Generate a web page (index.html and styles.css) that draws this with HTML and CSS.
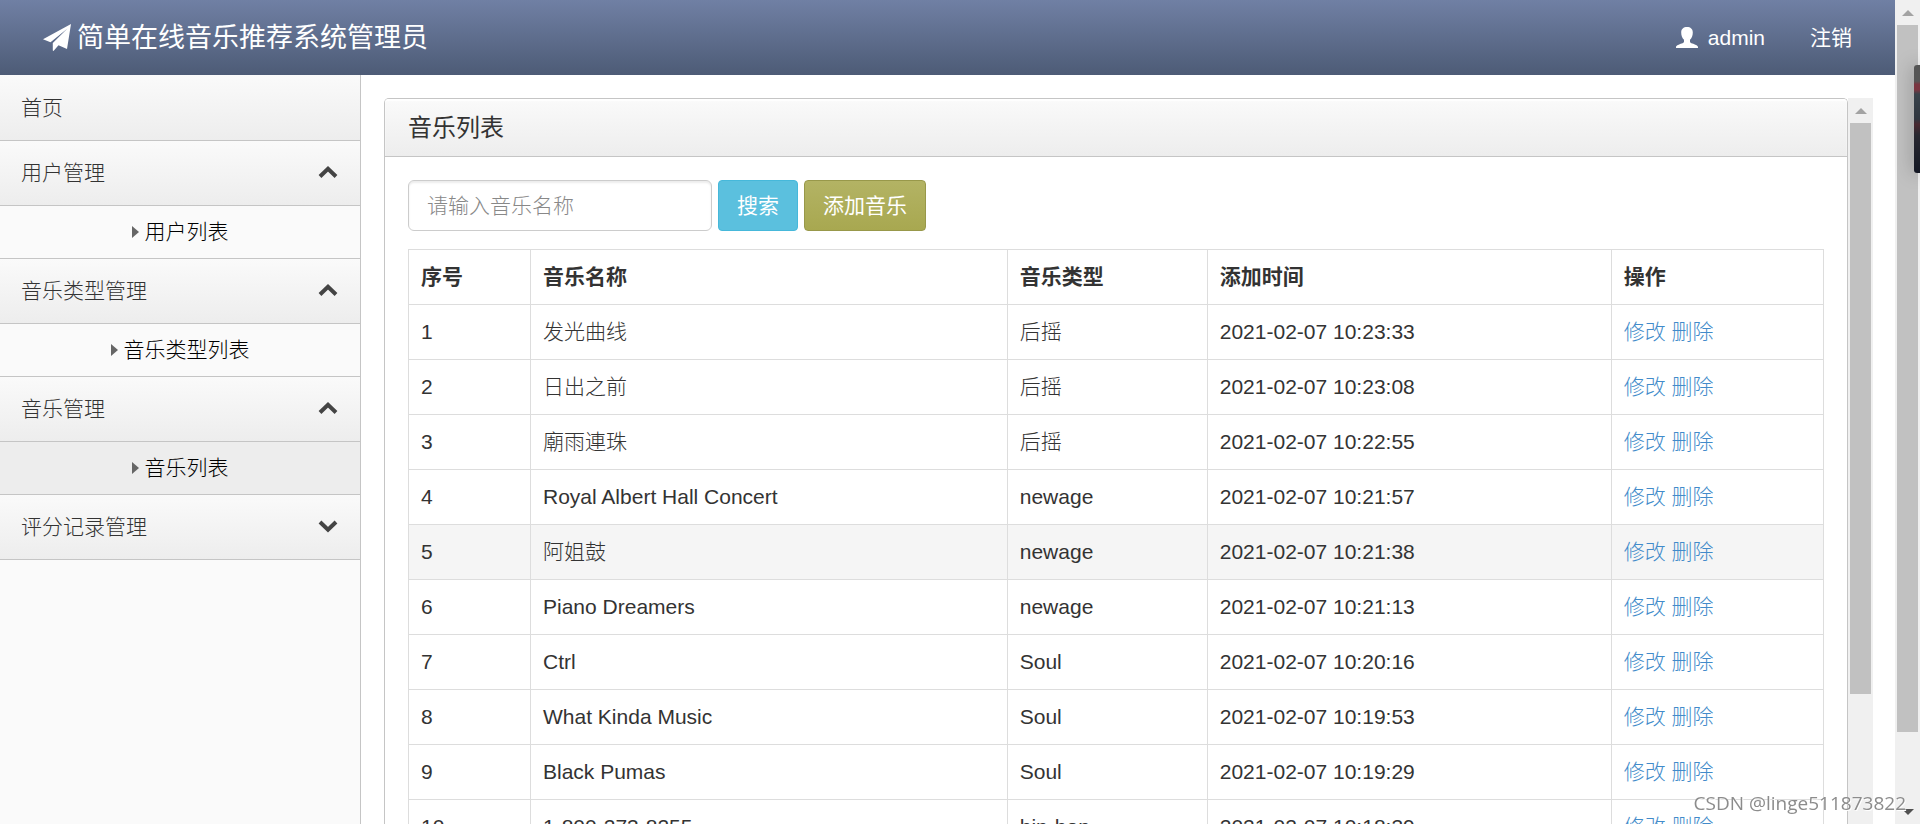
FILE: index.html
```html
<!DOCTYPE html>
<html lang="zh-CN">
<head>
<meta charset="utf-8">
<title>简单在线音乐推荐系统管理员</title>
<link rel="stylesheet" href="styles.css">
</head>
<body>
<div class="app">
  <header class="navbar">
    <a class="brand" href="#">
      <svg class="icon-plane" viewBox="0 0 28 27" aria-hidden="true"><path d="M28 0 L24 25 L15.500 21.300 L10.500 27 L9.800 26.600 V19 L24.500 4.500 L7.500 18.300 L0 15.200 Z"/></svg>
      <span>简单在线音乐推荐系统管理员</span>
    </a>
    <nav class="user-nav">
      <a class="user" href="#">
        <svg class="icon-user" viewBox="0 0 22 21" aria-hidden="true"><path d="M11 0C7.500 0 5.200 2 5.200 5.400c0 3 1.100 5.800 2.800 7.400v1.900c0 .8-1 1.300-2.300 1.800C3 17.500 0 18.400 0 20.200v.8h22v-.8c0-1.800-3-2.700-5.700-3.700-1.300-.5-2.300-1-2.300-1.800v-1.900c1.700-1.600 2.800-4.400 2.800-7.400C16.800 2 14.500 0 11 0z"/></svg>
        <span>admin</span>
      </a>
      <a href="#">注销</a>
    </nav>
  </header>
  <div class="layout">
    <nav class="sidebar">
      <a class="group" href="#">首页</a>
      <a class="group" href="#">用户管理<svg class="chevron" viewBox="0 0 20 14" aria-hidden="true"><path d="M2 10.500 L10 2.800 L18 10.500"/></svg></a>
      <a class="sub" href="#">用户列表</a>
      <a class="group" href="#">音乐类型管理<svg class="chevron" viewBox="0 0 20 14" aria-hidden="true"><path d="M2 10.500 L10 2.800 L18 10.500"/></svg></a>
      <a class="sub" href="#">音乐类型列表</a>
      <a class="group" href="#">音乐管理<svg class="chevron" viewBox="0 0 20 14" aria-hidden="true"><path d="M2 10.500 L10 2.800 L18 10.500"/></svg></a>
      <a class="sub active" href="#">音乐列表</a>
      <a class="group" href="#">评分记录管理<svg class="chevron" viewBox="0 0 20 14" aria-hidden="true"><path d="M2 2 L10 9.700 L18 2"/></svg></a>
    </nav>
    <main class="content">
      <section class="panel">
        <h1 class="panel-heading">音乐列表</h1>
        <div class="panel-body">
          <form class="toolbar">
            <input class="search" type="text" placeholder="请输入音乐名称" aria-label="音乐名称">
            <button class="btn btn-info" type="button">搜索</button>
            <button class="btn btn-add" type="button">添加音乐</button>
          </form>
          <table class="music">
            <colgroup><col class="col-no"><col class="col-name"><col class="col-type"><col class="col-time"><col class="col-act"></colgroup>
            <thead><tr><th>序号</th><th>音乐名称</th><th>音乐类型</th><th>添加时间</th><th>操作</th></tr></thead>
            <tbody>
              <tr><td>1</td><td>发光曲线</td><td>后摇</td><td>2021-02-07 10:23:33</td><td><a href="#">修改</a> <a href="#">删除</a></td></tr>
              <tr><td>2</td><td>日出之前</td><td>后摇</td><td>2021-02-07 10:23:08</td><td><a href="#">修改</a> <a href="#">删除</a></td></tr>
              <tr><td>3</td><td>廟雨連珠</td><td>后摇</td><td>2021-02-07 10:22:55</td><td><a href="#">修改</a> <a href="#">删除</a></td></tr>
              <tr><td>4</td><td>Royal Albert Hall Concert</td><td>newage</td><td>2021-02-07 10:21:57</td><td><a href="#">修改</a> <a href="#">删除</a></td></tr>
              <tr class="hover"><td>5</td><td>阿姐鼓</td><td>newage</td><td>2021-02-07 10:21:38</td><td><a href="#">修改</a> <a href="#">删除</a></td></tr>
              <tr><td>6</td><td>Piano Dreamers</td><td>newage</td><td>2021-02-07 10:21:13</td><td><a href="#">修改</a> <a href="#">删除</a></td></tr>
              <tr><td>7</td><td>Ctrl</td><td>Soul</td><td>2021-02-07 10:20:16</td><td><a href="#">修改</a> <a href="#">删除</a></td></tr>
              <tr><td>8</td><td>What Kinda Music</td><td>Soul</td><td>2021-02-07 10:19:53</td><td><a href="#">修改</a> <a href="#">删除</a></td></tr>
              <tr><td>9</td><td>Black Pumas</td><td>Soul</td><td>2021-02-07 10:19:29</td><td><a href="#">修改</a> <a href="#">删除</a></td></tr>
              <tr><td>10</td><td>1-800-273-8255</td><td>hip-hop</td><td>2021-02-07 10:18:39</td><td><a href="#">修改</a> <a href="#">删除</a></td></tr>
            </tbody>
          </table>
        </div>
      </section>
      <div class="scrollbar scrollbar-inner" aria-hidden="true"><span class="arrow-up"></span><span class="thumb"></span></div>
    </main>
  </div>
</div>
<div class="scrollbar scrollbar-page" aria-hidden="true"><span class="arrow-up"></span><span class="thumb"></span><span class="arrow-down"></span></div>
<div class="side-widget" aria-hidden="true"></div>
<div class="watermark">CSDN @linge511873822</div>
</body>
</html>
```
FILE: styles.css
```css
* { box-sizing: border-box; }

body {
  display: flex;
  height: 100vh;
  margin: 0;
  overflow: hidden;
  background: #fff;
  color: #333;
  font: 300 21px/30px "Liberation Sans", "Noto Sans CJK SC", sans-serif;
}

a { color: #428bca; text-decoration: none; }

.app {
  display: flex;
  flex: 1;
  flex-direction: column;
  min-width: 0;
}

.navbar {
  display: flex;
  flex: none;
  align-items: center;
  justify-content: space-between;
  height: 75px;
  padding: 0 43px;
  background: linear-gradient(#7080a4, #4d5b76);
}

.navbar a { color: #fff; }

.brand {
  display: flex;
  align-items: center;
  gap: 6px;
  font-size: 27px;
  font-weight: 400;
}

.icon-plane { width: 28px; height: 27px; fill: #fff; }
.icon-user { width: 22px; height: 21px; fill: #fff; }

.user-nav { display: flex; gap: 45px; font-weight: 400; }
.user { display: flex; align-items: center; gap: 10px; }

.layout { display: flex; flex: 1; min-height: 0; }

.sidebar {
  flex: none;
  width: 361px;
  overflow: hidden;
  border-right: 1px solid #c5c5c5;
  background: #fafafa;
}

.group {
  display: flex;
  align-items: center;
  justify-content: space-between;
  height: 65px;
  padding: 0 22px 0 21px;
  border-bottom: 1px solid #c5c5c5;
  background: linear-gradient(#fafafa, #ededed);
  color: #333;
}

.group:first-child { height: 66px; }

.chevron {
  width: 20px;
  height: 14px;
  fill: none;
  stroke: #444;
  stroke-width: 4;
}

.sub {
  display: flex;
  align-items: center;
  justify-content: center;
  gap: 6px;
  height: 53px;
  border-bottom: 1px solid #c5c5c5;
  background: #fafafa;
  color: #000;
}

.sub::before {
  content: "";
  border: 6px solid transparent;
  border-right: 0;
  border-left: 7px solid #666;
}

.sub.active { background: #ededed; }

.content {
  display: flex;
  flex: 1;
  min-width: 0;
  padding: 23px 22px 0 23px;
}

.panel {
  flex: 1;
  min-width: 0;
  overflow: hidden;
  border: 1px solid #c5c5c5;
  border-bottom: 0;
  border-radius: 5px 5px 0 0;
}

.panel-heading {
  margin: 0;
  padding: 14px 23px;
  border-bottom: 1px solid #c5c5c5;
  background: linear-gradient(#fafafa, #ededed);
  box-shadow: inset 0 2px 2px #fff;
  font-size: 24px;
  font-weight: 400;
  line-height: 29px;
}

.panel-body { padding: 23px; }

.toolbar { display: flex; gap: 6px; margin-bottom: 18px; }

.search,
.btn {
  height: 51px;
  padding: 0 18px;
  border: 1px solid #ccc;
  border-radius: 6px;
  font: inherit;
}

.search {
  width: 304px;
  box-shadow: inset 0 2px 2px rgba(0, 0, 0, 0.08);
  color: #555;
}

.search::placeholder { color: #888; opacity: 1; }

.btn { border-radius: 4px; color: #fff; font-weight: 400; }
.btn-info { border-color: #46b8da; background: #5bc0de; }
.btn-add { border-color: #98984a; background: linear-gradient(#b3b364, #a8a850); }

.music {
  width: 100%;
  border-collapse: collapse;
  table-layout: fixed;
}

.col-no { width: 122px; }
.col-type { width: 200px; }
.col-time { width: 404px; }
.col-act { width: 15%; }

.music th,
.music td {
  padding: 12px;
  border: 1px solid #ddd;
  text-align: left;
}

.hover { background: #f5f5f5; }

.scrollbar {
  display: flex;
  flex: none;
  flex-direction: column;
  width: 25px;
  padding: 0 2px;
  background: #f0f0f0;
}

.arrow-up,
.arrow-down {
  display: flex;
  flex: none;
  align-items: center;
  justify-content: center;
  height: 25px;
}

.arrow-up::before {
  content: "";
  border: 6px solid transparent;
  border-top: 0;
  border-bottom-color: #a3a3a3;
}

.arrow-down::before {
  content: "";
  border: 6px solid transparent;
  border-bottom: 0;
  border-top-color: #505050;
}

.thumb { background: #c1c1c1; }
.scrollbar-inner .thumb { height: calc(79% - 3px); }
.scrollbar-page .thumb { height: calc(86% - 2px); }
.scrollbar-page .arrow-down { margin-top: auto; }

.side-widget {
  position: fixed;
  top: 65px;
  right: 0;
  width: 6px;
  height: 108px;
  border-radius: 3px 0 0 3px;
  background: linear-gradient(#555 15%, #7a3540 18%, #7a3540 23%, #38424a 27%, #30363f 50%, #4a2830 55%, #282830 65%, #141824);
  box-shadow: 0 0 18px rgba(0, 0, 0, 0.4);
}

.watermark {
  position: fixed;
  right: 14px;
  bottom: 7px;
  color: #8c8c8c;
  font: 400 19px/28px "Open Sans", sans-serif;
  text-shadow: 1px 1px 0 #fff;
}
```
